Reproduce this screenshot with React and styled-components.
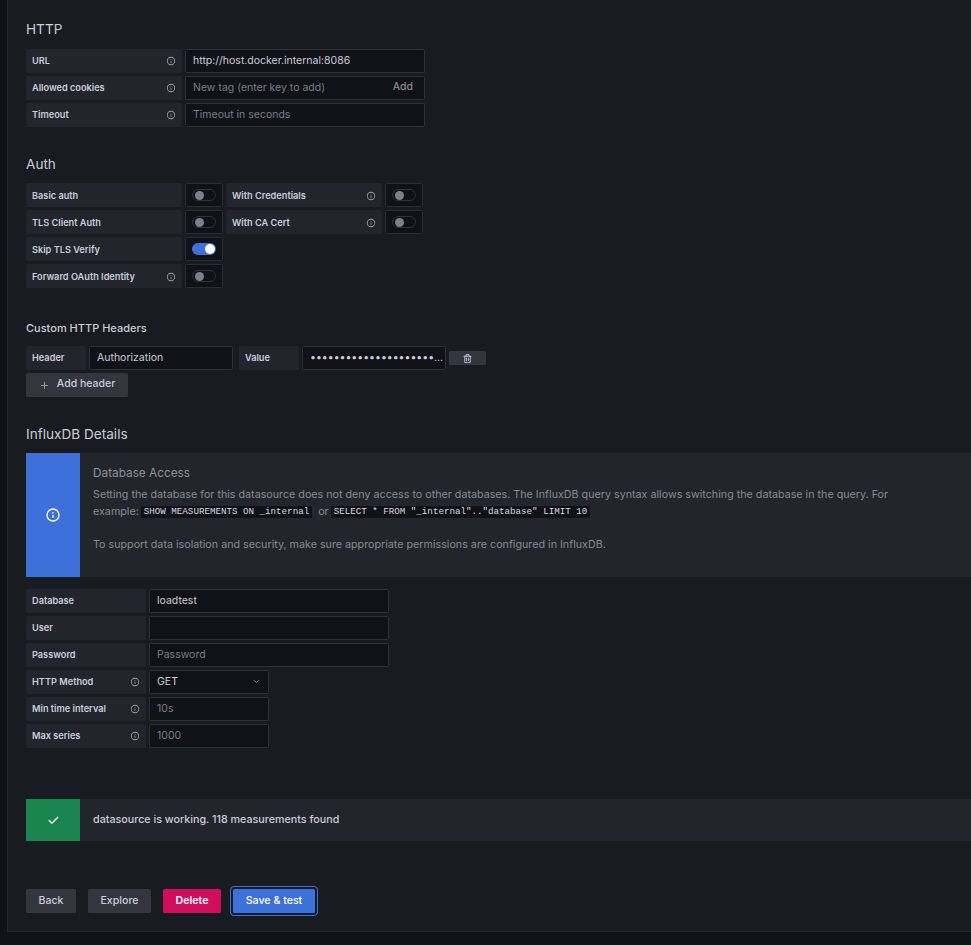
import React from "react";
import styled, { createGlobalStyle } from "styled-components";
import { Plus, Check, ChevronDown } from "lucide-react";

const Global = createGlobalStyle`
  html, body { margin: 0; padding: 0; background: #111217; height: 945px; overflow: hidden; }
  body { font-family: Inter, "Noto Sans", sans-serif; color: #ccccdc; -webkit-font-smoothing: auto; }
  * { box-sizing: border-box; }
`;

const Panel = styled.main`
  margin-left: 7px;
  height: 932px;
  background: #181b1f;
  border-left: 1px solid #25272d;
  border-bottom: 1px solid #25272d;
  padding: 20px 0 0 18px;
  display: flex;
  flex-direction: column;
`;
const Heading = styled.h3`
  margin: 0 0 ${p => p.$after}px;
  margin-top: ${p => p.$before || 0}px;
  font-size: 13.6px;
  line-height: 18px;
  font-weight: 400;
  color: #ccccdc;
`;
const SubHeading = styled.h4`
  margin: 31px 0 9px;
  font-size: 11px;
  line-height: 18px;
  font-weight: 500;
  color: #ccccdc;
`;
const Rows = styled.div`
  display: flex;
  flex-direction: column;
  gap: 3px;
`;
const Row = styled.div`
  display: flex;
  gap: 3px;
  height: 24px;
  align-items: stretch;
`;
const Label = styled.div`
  width: ${p => p.$w}px;
  flex: none;
  margin-left: ${p => p.$before || 0}px;
  background: #22252b;
  border-radius: 1.5px;
  padding: 0 6px ${p => (p.$flush ? 0 : 2)}px;
  display: flex;
  align-items: center;
  justify-content: space-between;
  font-size: 9.2px;
  font-weight: 600;
  color: #ccccdc;
  white-space: nowrap;
`;
const InfoSvg = styled.svg`
  width: ${p => p.$size || 10}px;
  height: ${p => p.$size || 10}px;
  flex: none;
  fill: currentColor;
  color: ${p => p.$color || "#a0a1ac"};
  margin-top: ${p => (p.$size ? 0 : 1)}px;
`;
const InfoIcon = (p) => (
  <InfoSvg viewBox="0 0 24 24" {...p}>
    <path d="M12,2A10,10,0,1,0,22,12,10,10,0,0,0,12,2Zm0,18a8,8,0,1,1,8-8A8,8,0,0,1,12,20Zm0-8.5a1,1,0,0,0-1,1v3a1,1,0,0,0,2,0v-3A1,1,0,0,0,12,11.5Zm0-4a1.25,1.25,0,1,0,1.25,1.25A1.25,1.25,0,0,0,12,7.5Z" />
  </InfoSvg>
);
const Field = styled.div`
  width: ${p => p.$w}px;
  flex: none;
  background: #111217;
  border: 1px solid #2f3137;
  border-radius: 1.5px;
  padding: 0 7px 2px;
  display: flex;
  align-items: center;
  justify-content: space-between;
  font-size: 10.5px;
  color: ${p => (p.$placeholder ? "#7b7d87" : "#ccccdc")};
  white-space: nowrap;
  overflow: hidden;
`;
const AddTag = styled.span`
  color: #84868f;
  font-weight: 500;
  padding-right: 4px;
  margin-top: -2px;
`;
const Dots = styled.span`
  color: #ccccdc;
  font-size: 10.5px;
`;
const ToggleBox = styled.div`
  width: 38px;
  flex: none;
  background: #111217;
  border: 1px solid #2a2c32;
  border-radius: 1.5px;
  display: flex;
  align-items: center;
  justify-content: center;
`;
const Track = styled.span`
  width: 24px;
  height: 12px;
  border-radius: 6px;
  display: flex;
  align-items: center;
  padding: 0 ${p => (p.$on ? 1 : 2)}px;
  justify-content: ${p => (p.$on ? "flex-end" : "flex-start")};
  background: ${p => (p.$on ? "#3d71d9" : "#111217")};
  border: ${p => (p.$on ? "none" : "1px solid #2f3137")};
`;
const Knob = styled.span`
  width: ${p => (p.$on ? 10 : 9)}px;
  height: ${p => (p.$on ? 10 : 9)}px;
  border-radius: 50%;
  background: ${p => (p.$on ? "#ffffff" : "#7e7f88")};
`;
const Toggle = ({ on }) => (
  <ToggleBox><Track $on={on}><Knob $on={on} /></Track></ToggleBox>
);
const TrashButton = styled.div`
  width: 37px;
  height: 14px;
  align-self: center;
  background: #33363c;
  border-radius: 1.5px;
  display: flex;
  align-items: center;
  justify-content: center;
  color: #ccccdc;
`;
const AddHeader = styled.div`
  margin-top: 3px;
  width: 102px;
  height: 24px;
  background: #33363c;
  border-radius: 1.5px;
  display: flex;
  align-items: center;
  justify-content: center;
  gap: 7px;
  font-size: 10.5px;
  font-weight: 500;
  color: #ccccdc;
  padding-bottom: 3px;
  svg { color: #9a9ba5; margin-top: 3px; }
`;
const Alert = styled.section`
  display: flex;
  background: #22252b;
  height: ${p => p.$h}px;
  margin-top: ${p => p.$before || 0}px;
  margin-bottom: ${p => p.$after || 0}px;
`;
const AlertIcon = styled.div`
  width: 54px;
  flex: none;
  background: ${p => p.$bg};
  color: #fff;
  display: flex;
  align-items: center;
  justify-content: center;
`;
const AlertBody = styled.div`
  padding: ${p => p.$pad};
  flex: 1;
  min-width: 0;
  font-size: 10.72px;
  line-height: 17px;
  color: #898a94;
  white-space: nowrap;
`;
const AlertTitle = styled.div`
  font-size: 11.8px;
  line-height: 16px;
  color: #8f9099;
  margin-bottom: 5px;
`;
const Code = styled.code`
  display: inline-block;
  font-family: "Liberation Mono", "DejaVu Sans Mono", monospace;
  font-size: 9.2px;
  line-height: 12px;
  color: #d8d8e4;
  background: #111217;
  border: 1px solid #25272d;
  border-radius: 2px;
  padding: 0 3px;
  margin: 0 ${p => p.$side || 1}px 0 1px;
  white-space: pre;
`;
const Line = styled.div`
  margin-top: ${p => p.$before || 0}px;
  display: flex;
  align-items: center;
  gap: ${p => p.$gap || 0}px;
`;
const Success = styled.div`
  display: flex;
  align-items: center;
  height: 100%;
  padding-bottom: 2px;
  font-size: 10.72px;
  font-weight: 500;
  color: #ccccdc;
`;
const Actions = styled.div`
  display: flex;
  align-items: center;
  gap: 12px;
`;
const Btn = styled.button`
  width: ${p => p.$w}px;
  height: 24px;
  border: none;
  padding: 0 0 2px;
  border-radius: 1.5px;
  font: ${p => p.$weight || 500} 10.6px Inter, sans-serif;
  color: ${p => p.$color || "#ccccdc"};
  background: ${p => p.$bg || "#33363c"};
  ${p => p.$focus && "box-shadow: 0 0 0 2px #181b1f, 0 0 0 3px #3d71d9;"}
`;

export default function App() {
  return (
    <>
      <Global />
      <Panel>
        <Heading $after={11}>HTTP</Heading>
        <Rows>
          <Row>
            <Label $w={156}>URL<InfoIcon /></Label>
            <Field $w={240}>http://host.docker.internal:8086</Field>
          </Row>
          <Row>
            <Label $w={156}>Allowed cookies<InfoIcon /></Label>
            <Field $w={240} $placeholder>New tag (enter key to add)<AddTag>Add</AddTag></Field>
          </Row>
          <Row>
            <Label $w={156}>Timeout<InfoIcon /></Label>
            <Field $w={240} $placeholder>Timeout in seconds</Field>
          </Row>
        </Rows>

        <Heading $before={28} $after={10}>Auth</Heading>
        <Rows>
          <Row>
            <Label $w={156} $flush>Basic auth</Label>
            <Toggle />
            <Label $w={156} $flush>With Credentials<InfoIcon /></Label>
            <Toggle />
          </Row>
          <Row>
            <Label $w={156} $flush>TLS Client Auth</Label>
            <Toggle />
            <Label $w={156} $flush>With CA Cert<InfoIcon /></Label>
            <Toggle />
          </Row>
          <Row>
            <Label $w={156} $flush>Skip TLS Verify</Label>
            <Toggle on />
          </Row>
          <Row>
            <Label $w={156} $flush>Forward OAuth Identity<InfoIcon /></Label>
            <Toggle />
          </Row>
        </Rows>

        <SubHeading>Custom HTTP Headers</SubHeading>
        <Row>
          <Label $w={60}>Header</Label>
          <Field $w={144}>Authorization</Field>
          <Label $w={60} $before={3}>Value</Label>
          <Field $w={144}><Dots>•••••••••••••••••••••...</Dots></Field>
          <TrashButton>
            <svg width="11" height="11" viewBox="0 0 24 24" fill="currentColor">
              <path d="M10,18a1,1,0,0,0,1-1V11a1,1,0,0,0-2,0v6A1,1,0,0,0,10,18ZM20,6H16V5a3,3,0,0,0-3-3H11A3,3,0,0,0,8,5V6H4A1,1,0,0,0,4,8H5V19a3,3,0,0,0,3,3h8a3,3,0,0,0,3-3V8h1a1,1,0,0,0,0-2ZM10,5a1,1,0,0,1,1-1h2a1,1,0,0,1,1,1V6H10Zm7,14a1,1,0,0,1-1,1H8a1,1,0,0,1-1-1V8H17Zm-3-1a1,1,0,0,0,1-1V11a1,1,0,0,0-2,0v6A1,1,0,0,0,14,18Z" />
            </svg>
          </TrashButton>
        </Row>
        <AddHeader><Plus size={11} strokeWidth={2} />Add header</AddHeader>

        <Heading $before={28} $after={10}>InfluxDB Details</Heading>
        <Alert $h={124} $after={12}>
          <AlertIcon $bg="#3d71d9"><InfoIcon $size={16} $color="#ffffff" /></AlertIcon>
          <AlertBody $pad="12px 0 0 13px">
            <AlertTitle>Database Access</AlertTitle>
            <Line>Setting the database for this datasource does not deny access to other databases. The InfluxDB query syntax allows switching the database in the query. For</Line>
            <Line>
              <span>example:</span>
              <Code $side={5}>SHOW MEASUREMENTS ON _internal</Code>
              <span>or</span>
              <Code>SELECT * FROM "_internal".."database" LIMIT 10</Code>
            </Line>
            <Line $before={16}>To support data isolation and security, make sure appropriate permissions are configured in InfluxDB.</Line>
          </AlertBody>
        </Alert>

        <Rows>
          <Row>
            <Label $w={120}>Database</Label>
            <Field $w={240}>loadtest</Field>
          </Row>
          <Row>
            <Label $w={120}>User</Label>
            <Field $w={240} />
          </Row>
          <Row>
            <Label $w={120}>Password</Label>
            <Field $w={240} $placeholder>Password</Field>
          </Row>
          <Row>
            <Label $w={120}>HTTP Method<InfoIcon /></Label>
            <Field $w={120}>GET<ChevronDown size={9} color="#9a9ba5" /></Field>
          </Row>
          <Row>
            <Label $w={120}>Min time interval<InfoIcon /></Label>
            <Field $w={120} $placeholder>10s</Field>
          </Row>
          <Row>
            <Label $w={120}>Max series<InfoIcon /></Label>
            <Field $w={120} $placeholder>1000</Field>
          </Row>
        </Rows>

        <Alert $h={42} $before={51} $after={48}>
          <AlertIcon $bg="#1b8550"><Check size={13} strokeWidth={2.2} /></AlertIcon>
          <AlertBody $pad="0 0 0 13px"><Success>datasource is working. 118 measurements found</Success></AlertBody>
        </Alert>

        <Actions>
          <Btn $w={50}>Back</Btn>
          <Btn $w={63}>Explore</Btn>
          <Btn $w={58} $bg="#d10e5c" $color="#ffffff" $weight={600}>Delete</Btn>
          <Btn $w={82} $bg="#3d71d9" $color="#ffffff" $focus>Save &amp; test</Btn>
        </Actions>
      </Panel>
    </>
  );
}
